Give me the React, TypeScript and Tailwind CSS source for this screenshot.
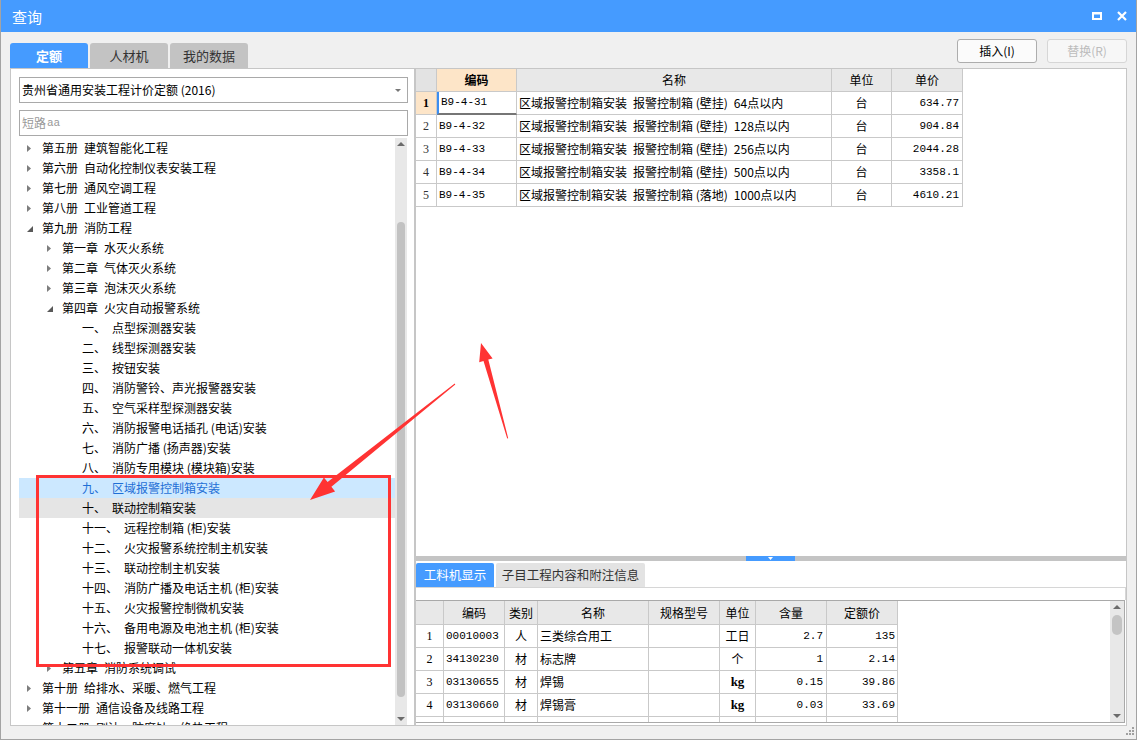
import React from 'react';

type TreeRow = { lv: 0 | 1 | 2; no: string; name: string; open?: boolean; mark?: 'sel' | 'hover' };

const treeRows: TreeRow[] = [
  { lv: 0, no: '第五册', name: '建筑智能化工程' },
  { lv: 0, no: '第六册', name: '自动化控制仪表安装工程' },
  { lv: 0, no: '第七册', name: '通风空调工程' },
  { lv: 0, no: '第八册', name: '工业管道工程' },
  { lv: 0, no: '第九册', name: '消防工程', open: true },
  { lv: 1, no: '第一章', name: '水灭火系统' },
  { lv: 1, no: '第二章', name: '气体灭火系统' },
  { lv: 1, no: '第三章', name: '泡沫灭火系统' },
  { lv: 1, no: '第四章', name: '火灾自动报警系统', open: true },
  { lv: 2, no: '一、', name: '点型探测器安装' },
  { lv: 2, no: '二、', name: '线型探测器安装' },
  { lv: 2, no: '三、', name: '按钮安装' },
  { lv: 2, no: '四、', name: '消防警铃、声光报警器安装' },
  { lv: 2, no: '五、', name: '空气采样型探测器安装' },
  { lv: 2, no: '六、', name: '消防报警电话插孔 (电话)安装' },
  { lv: 2, no: '七、', name: '消防广播 (扬声器)安装' },
  { lv: 2, no: '八、', name: '消防专用模块 (模块箱)安装' },
  { lv: 2, no: '九、', name: '区域报警控制箱安装', mark: 'sel' },
  { lv: 2, no: '十、', name: '联动控制箱安装', mark: 'hover' },
  { lv: 2, no: '十一、', name: '远程控制箱 (柜)安装' },
  { lv: 2, no: '十二、', name: '火灾报警系统控制主机安装' },
  { lv: 2, no: '十三、', name: '联动控制主机安装' },
  { lv: 2, no: '十四、', name: '消防广播及电话主机 (柜)安装' },
  { lv: 2, no: '十五、', name: '火灾报警控制微机安装' },
  { lv: 2, no: '十六、', name: '备用电源及电池主机 (柜)安装' },
  { lv: 2, no: '十七、', name: '报警联动一体机安装' },
  { lv: 1, no: '第五章', name: '消防系统调试' },
  { lv: 0, no: '第十册', name: '给排水、采暖、燃气工程' },
  { lv: 0, no: '第十一册', name: '通信设备及线路工程' },
  { lv: 0, no: '第十二册', name: '刷油、防腐蚀、绝热工程' },
];

const indent = ['pl-[8px]', 'pl-[28px]', 'pl-[48px]'];

const quotas = [
  ['B9-4-31', '报警控制箱 (壁挂)', '64点以内', '634.77'],
  ['B9-4-32', '报警控制箱 (壁挂)', '128点以内', '904.84'],
  ['B9-4-33', '报警控制箱 (壁挂)', '256点以内', '2044.28'],
  ['B9-4-34', '报警控制箱 (壁挂)', '500点以内', '3358.1'],
  ['B9-4-35', '报警控制箱 (落地)', '1000点以内', '4610.21'],
];

const matCols = [
  { w: 'w-[28px]', t: '', a: 'justify-center', mono: true },
  { w: 'w-[61px]', t: '编码', a: 'justify-start pl-[2px]', mono: true },
  { w: 'w-[33px]', t: '类别', a: 'justify-center', mono: false },
  { w: 'w-[111px]', t: '名称', a: 'justify-start pl-[2px]', mono: false },
  { w: 'w-[71px]', t: '规格型号', a: 'justify-start pl-[2px]', mono: false },
  { w: 'w-[36px]', t: '单位', a: 'justify-center', mono: false },
  { w: 'w-[71px]', t: '含量', a: 'justify-end pr-[3px]', mono: true },
  { w: 'w-[71px]', t: '定额价', a: 'justify-end pr-[2px]', mono: true },
];

const materials = [
  ['1', '00010003', '人', '三类综合用工', '', '工日', '2.7', '135'],
  ['2', '34130230', '材', '标志牌', '', '个', '1', '2.14'],
  ['3', '03130655', '材', '焊锡', '', 'kg', '0.15', '39.86'],
  ['4', '03130660', '材', '焊锡膏', '', 'kg', '0.03', '33.69'],
  ['', '', '材', '膨胀螺栓', '', '套', '', ''],
];

const mono = "font-['Liberation_Mono',monospace] text-[11px]";

function Caret({ open }: { open?: boolean }) {
  if (open) {
    return (
      <svg width="6" height="6" viewBox="0 0 6 6" className="mt-[2px]">
        <path d="M6 0V6H0Z" fill="#595959" />
      </svg>
    );
  }
  return (
    <svg width="4" height="7" viewBox="0 0 4 7">
      <path d="M0 0L4 3.5L0 7Z" fill="#7d7d7d" />
    </svg>
  );
}

function ArrowUp() {
  return (
    <svg width="8" height="4" viewBox="0 0 8 4">
      <path d="M0 4L4 0L8 4Z" fill="#6b6b6b" />
    </svg>
  );
}

function ArrowDown() {
  return (
    <svg width="8" height="4" viewBox="0 0 8 4">
      <path d="M0 0L8 0L4 4Z" fill="#6b6b6b" />
    </svg>
  );
}

const App: React.FC = () => {
  return (
    <div className="relative flex h-[740px] w-[1137px] flex-col overflow-hidden border-x border-b border-[#a3a3a3] bg-[#f0f0f0] font-['Noto_Sans_CJK_SC',sans-serif] text-black">
      {/* title bar */}
      <div className="flex h-[32px] shrink-0 items-center justify-between bg-[#459bff] pl-[11px] pr-[9px] text-white">
        <span className="text-[15px] leading-none">查询</span>
        <div className="flex items-center gap-[15px]">
          <svg width="10" height="8" viewBox="0 0 10 8">
            <path fillRule="evenodd" d="M0 0H10V8H0Z M2 2.5H8V6H2Z" fill="white" />
          </svg>
          <svg width="10" height="10" viewBox="0 0 10 10">
            <path d="M1 1L9 9M9 1L1 9" stroke="white" strokeWidth="2.2" />
          </svg>
        </div>
      </div>

      <div className="flex h-[694px] shrink-0">
        {/* left column */}
        <div className="ml-[9px] flex w-[405px] flex-col pt-[11px]">
          <div className="flex h-[25px] gap-[2px] text-[13px]">
            <div className="flex w-[78px] items-center justify-center rounded-t-[3px] bg-[#459bff] font-bold text-white">定额</div>
            <div className="flex w-[78px] items-center justify-center rounded-t-[3px] bg-[#c3c3c3] text-[#333]">人材机</div>
            <div className="flex w-[78px] items-center justify-center rounded-t-[3px] bg-[#c3c3c3] text-[#333]">我的数据</div>
          </div>
          <div className="flex h-[658px] flex-col border border-[#c6c6c6] bg-white pl-[8px] pr-[6px] pt-[8px]">
            <div className="flex h-[26px] w-[389px] items-center justify-between border border-[#a9a9a9] pl-[2px] pr-[6px] text-[12px]">
              <span>贵州省通用安装工程计价定额 (2016)</span>
              <svg width="6" height="3" viewBox="0 0 6 3">
                <path d="M0 0H6L3 3Z" fill="#777" />
              </svg>
            </div>
            <div className="mt-[7px] flex h-[26px] w-[389px] items-center border border-[#a9a9a9] pl-[2px] text-[12px] text-[#999]">
              短路<span className={`${mono} ml-[1px]`}>aa</span>
            </div>
            <div className="mt-[2px] flex h-[587px] w-[388px]">
              <div className="flex w-[376px] flex-col overflow-hidden">
                {treeRows.map((r, i) => (
                  <div
                    key={i}
                    className={`flex h-[20px] shrink-0 items-center whitespace-nowrap text-[12px] leading-[20px] ${indent[r.lv]} ${
                      r.mark === 'sel' ? 'bg-[#cce8ff] text-[#1f6fd6]' : r.mark === 'hover' ? 'bg-[#e5e5e5]' : ''
                    }`}
                  >
                    <span className="flex w-[15px] shrink-0 items-center">{r.lv < 2 && <Caret open={r.open} />}</span>
                    <span>{r.no}</span>
                    <span className="ml-[6px]">{r.name}</span>
                  </div>
                ))}
              </div>
              <div className="flex w-[12px] flex-col items-center bg-[#e8e8e8]">
                <div className="flex h-[12px] items-center justify-center">
                  <ArrowUp />
                </div>
                <div className="h-[72px]" />
                <div className="h-[475px] w-[8px] rounded-[4px] bg-[#c2c2c2]" />
                <div className="flex-1" />
                <div className="flex h-[12px] items-center justify-center">
                  <ArrowDown />
                </div>
              </div>
            </div>
          </div>
        </div>

        {/* right column */}
        <div className="flex w-[712px] flex-col pt-[7px]">
          <div className="flex h-[24px] justify-end gap-[10px] text-[12px]">
            <button className="w-[80px] rounded-[3px] border border-[#adadad] bg-[#fbfbfb] text-black">插入(I)</button>
            <button className="w-[80px] rounded-[3px] border border-[#d6d6d6] bg-[#f7f7f7] text-[#bcbcbc]">替换(R)</button>
          </div>
          <div className="mt-[5px] flex h-[658px] flex-col border border-[#c6c6c6] bg-white">
            <div className="h-[487px] shrink-0">
              <div className="flex h-[23px] text-[12px]">
                <div className="w-[21px] border-r border-b border-[#c9c9c9] bg-[#e3e3e3]" />
                <div className="flex w-[80px] items-center justify-center border-r border-b border-[#c9c9c9] bg-[#fde5c8] font-bold">编码</div>
                <div className="flex w-[315px] items-center justify-center border-r border-b border-[#c9c9c9] bg-[#e8e8e8]">名称</div>
                <div className="flex w-[60px] items-center justify-center border-r border-b border-[#c9c9c9] bg-[#e8e8e8]">单位</div>
                <div className="flex w-[71px] items-center justify-center border-r border-b border-[#c9c9c9] bg-[#e8e8e8]">单价</div>
              </div>
              {quotas.map((q, i) => (
                <div key={q[0]} className="flex h-[23px] text-[12px]">
                  <div
                    className={`flex w-[21px] items-center justify-center border-r border-b border-[#c9c9c9] font-['Liberation_Serif',serif] text-[12px] ${
                      i === 0 ? 'bg-[#fde5c8] font-bold' : 'text-[#333]'
                    }`}
                  >
                    {i + 1}
                  </div>
                  <div
                    className={`flex w-[80px] items-center pl-[2px] ${mono} ${
                      i === 0 ? 'border-l-2 border-r border-b-2 border-l-[#3d8ef0] border-r-[#c9c9c9] border-b-[#767676]' : 'border-r border-b border-[#c9c9c9]'
                    }`}
                  >
                    {q[0]}
                  </div>
                  <div className="flex w-[315px] items-center whitespace-nowrap border-r border-b border-[#c9c9c9] pl-[2px]">
                    <span>区域报警控制箱安装</span>
                    <span className="ml-[6px]">{q[1]}</span>
                    <span className="ml-[6px]">{q[2]}</span>
                  </div>
                  <div className="flex w-[60px] items-center justify-center border-r border-b border-[#c9c9c9]">台</div>
                  <div className={`flex w-[71px] items-center justify-end border-r border-b border-[#c9c9c9] pr-[3px] ${mono}`}>{q[3]}</div>
                </div>
              ))}
            </div>

            {/* splitter */}
            <div className="flex h-[5px] shrink-0 bg-[#c4c4c4] pl-[330px]">
              <div className="flex h-[5px] w-[49px] items-center justify-center bg-[#459bff]">
                <svg width="5" height="3" viewBox="0 0 5 3">
                  <path d="M0 0H5L2.5 3Z" fill="white" />
                </svg>
              </div>
            </div>

            <div className="flex h-[164px] shrink-0 flex-col pt-[2px]">
              <div className="flex h-[25px] gap-[2px] border-b border-[#d6d6d6] text-[12.5px]">
                <div className="flex h-[24px] w-[78px] items-center justify-center rounded-t-[2px] bg-[#459bff] text-white">工料机显示</div>
                <div className="flex h-[24px] w-[149px] items-center justify-center rounded-t-[2px] bg-[#e3e3e3] text-[#333]">子目工程内容和附注信息</div>
              </div>
              <div className="h-[12px] border-r border-[#d6d6d6]" />
              <div className="mr-px flex h-[123px] border-y border-r border-[#a9a9a9]">
                <div className="flex flex-1 flex-col overflow-hidden">
                  <div className="flex h-[24px] shrink-0 text-[12px]">
                    {matCols.map((c, i) => (
                      <div key={i} className={`flex ${c.w} items-center justify-center border-r border-b border-[#c9c9c9] bg-[#e8e8e8]`}>
                        {c.t}
                      </div>
                    ))}
                  </div>
                  {materials.map((m, r) => (
                    <div key={r} className="flex h-[23px] shrink-0 text-[12px]">
                      {matCols.map((c, i) => (
                        <div
                          key={i}
                          className={`flex ${c.w} items-center whitespace-nowrap border-r border-b border-[#c9c9c9] ${c.a} ${
                            i === 0 ? "font-['Liberation_Serif',serif] text-[12px]" : c.mono ? mono : ''
                          } ${m[i] === 'kg' ? "font-['Liberation_Serif',serif] text-[13px] font-bold" : ''}`}
                        >
                          {m[i]}
                        </div>
                      ))}
                    </div>
                  ))}
                </div>
                <div className="flex w-[14px] flex-col items-center bg-[#e8e8e8]">
                  <div className="flex h-[12px] items-center justify-center">
                    <ArrowUp />
                  </div>
                  <div className="h-[2px]" />
                  <div className="h-[20px] w-[10px] rounded-[5px] bg-[#c4c4c4]" />
                  <div className="flex-1" />
                  <div className="flex h-[12px] items-center justify-center">
                    <ArrowDown />
                  </div>
                </div>
              </div>
            </div>
          </div>
        </div>
      </div>

      {/* status strip with resize grip */}
      <div className="flex flex-1 items-start justify-end pr-[2px] pt-[1px]">
        <svg width="8" height="8" viewBox="0 0 8 8">
          <rect x="6" y="0" width="2" height="2" fill="#a0a0a0" />
          <rect x="3" y="3" width="2" height="2" fill="#a0a0a0" />
          <rect x="6" y="3" width="2" height="2" fill="#a0a0a0" />
          <rect x="0" y="6" width="2" height="2" fill="#a0a0a0" />
          <rect x="3" y="6" width="2" height="2" fill="#a0a0a0" />
          <rect x="6" y="6" width="2" height="2" fill="#a0a0a0" />
        </svg>
      </div>

      {/* red annotations drawn over the dialog */}
      <div className="pointer-events-none absolute left-[35px] top-[475px] h-[192px] w-[355px] border-[3px] border-[#f33]" />
      <svg className="pointer-events-none absolute left-0 top-0" width="1137" height="740" viewBox="0 0 1137 740">
        <polygon points="454.3,384.4 330.4,486.7 334.1,491.4 309,500 322.9,477.4 326.6,482.1 453.7,383.6" fill="#f33" />
        <polygon points="507.2,438.2 487.3,359.6 491.6,358.4 480,343 478.2,362.2 482.5,361 506.2,438.4" fill="#f33" />
      </svg>
    </div>
  );
};

export default App;
